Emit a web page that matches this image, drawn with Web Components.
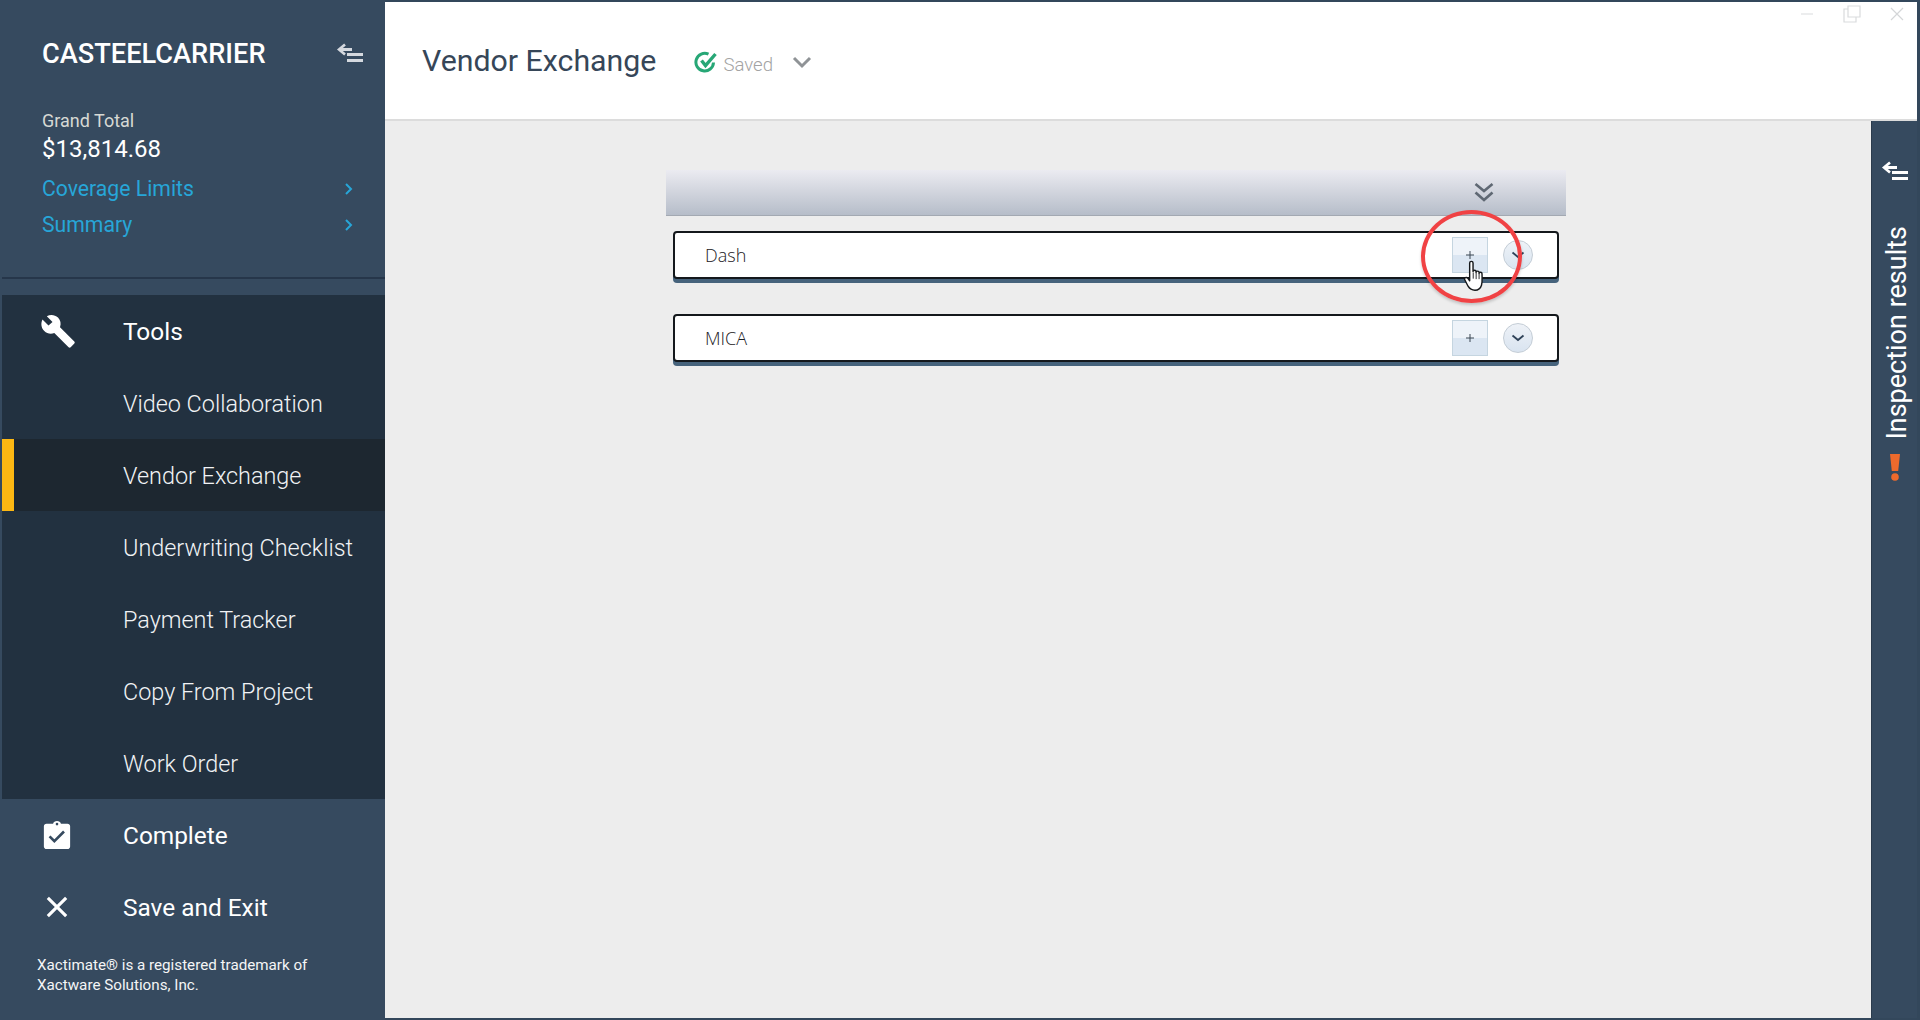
<!DOCTYPE html>
<html>
<head>
<meta charset="utf-8">
<title>Vendor Exchange</title>
<style>
  html, body { margin: 0; height: 100%; overflow: hidden; background: #ededed; }
  body { font-family: Roboto, "Liberation Sans", sans-serif; }
</style>
</head>
<body>
<app-shell>
  <side-nav slot="nav">
    <nav-link slot="tools" icon="wrench" strong>Tools</nav-link>
    <nav-link slot="tools">Video Collaboration</nav-link>
    <nav-link slot="tools" active>Vendor Exchange</nav-link>
    <nav-link slot="tools">Underwriting Checklist</nav-link>
    <nav-link slot="tools">Payment Tracker</nav-link>
    <nav-link slot="tools">Copy From Project</nav-link>
    <nav-link slot="tools">Work Order</nav-link>
    <nav-link slot="actions" icon="clipboard" strong>Complete</nav-link>
    <nav-link slot="actions" icon="close" strong>Save and Exit</nav-link>
  </side-nav>
  <page-header slot="header" heading="Vendor Exchange"></page-header>
  <vendor-panel slot="main">
    <vendor-row hot>Dash</vendor-row>
    <vendor-row>MICA</vendor-row>
  </vendor-panel>
  <inspection-rail slot="rail"></inspection-rail>
</app-shell>

<script>
const COLLAPSE = `<path d="M9 2.500 3 7.500l6 5" fill="none" stroke="currentColor" stroke-width="2.600"/><path d="M3.500 7.500H16" stroke="currentColor" stroke-width="3"/><path d="M11 12.500H27M11 18.500H27" stroke="currentColor" stroke-width="3"/>`;

class AppShell extends HTMLElement {
  constructor() {
    super();
    this.attachShadow({ mode: 'open' });
    this.shadowRoot.innerHTML = `
      <style>
        :host {
          display: grid;
          grid-template-columns: 383px 1fr 46px;
          grid-template-rows: 119px 1fr;
          width: 1920px;
          height: 1020px;
          box-sizing: border-box;
          border: 2px solid #33475b;
          border-width: 2px 3px 2px 2px;
          background: #ededed;
        }
        .nav { grid-row: 1 / 3; display: flex; min-height: 0; margin-top: -2px; margin-bottom: -2px; }
        .header { grid-column: 2 / 4; display: block; }
        .main { min-width: 0; }
        .rail { display: flex; }
      </style>
      <div class="nav"><slot name="nav"></slot></div>
      <div class="header"><slot name="header"></slot></div>
      <div class="main"><slot name="main"></slot></div>
      <div class="rail"><slot name="rail"></slot></div>
    `;
  }
}
customElements.define('app-shell', AppShell);

class SideNav extends HTMLElement {
  constructor() {
    super();
    this.attachShadow({ mode: 'open' });
    this.shadowRoot.innerHTML = `
      <style>
        :host {
          display: flex;
          flex-direction: column;
          flex: 1;
          background: #364a5f;
          color: #fff;
          font-family: Roboto, "Liberation Sans", sans-serif;
          margin-left: -2px;
          padding-left: 2px;
          width: 385px;
          box-sizing: border-box;
        }
        .brand {
          display: flex;
          justify-content: space-between;
          align-items: center;
          height: 30px;
          margin-top: 39px;
          padding: 0 21px 0 40px;
        }
        .brand b { font-weight: 500; font-size: 27.200px; line-height: 30px; }
        .brand svg { width: 28px; height: 22px; color: #d5d9df; margin-top: -3px; }
        .total { padding: 0 29px 0 40px; margin-top: 41px; }
        .lbl { font-size: 18px; line-height: 22px; color: #d6d9d4; }
        .amt { font-size: 24px; line-height: 28px; margin-top: 3px; }
        .lnk {
          display: flex;
          justify-content: space-between;
          align-items: center;
          color: #27a6d8;
          font-size: 21.200px;
          line-height: 24px;
          height: 36px;
        }
        .lnk svg { width: 10px; height: 14px; margin-right: 2px; }
        .links { margin-top: 8px; }
        .rule { height: 2px; background: #26364a; margin-top: 34px; }
        .tools { margin-top: 16px; background: #223140; }
        .foot { font-size: 15.200px; line-height: 20px; padding: 12px 0 0 35px; color: #f4f5f6; }
      </style>
      <div class="brand">
        <b>CASTEELCARRIER</b>
        <svg viewBox="0 0 28 22">${COLLAPSE}</svg>
      </div>
      <div class="total">
        <div class="lbl">Grand Total</div>
        <div class="amt">$13,814.68</div>
        <div class="links">
          <div class="lnk">Coverage Limits <svg viewBox="0 0 10 14"><path d="M2 2l5 5-5 5" fill="none" stroke="#27a6d8" stroke-width="2"/></svg></div>
          <div class="lnk">Summary <svg viewBox="0 0 10 14"><path d="M2 2l5 5-5 5" fill="none" stroke="#27a6d8" stroke-width="2"/></svg></div>
        </div>
      </div>
      <div class="rule"></div>
      <div class="tools"><slot name="tools"></slot></div>
      <div><slot name="actions"></slot></div>
      <div class="foot">Xactimate® is a registered trademark of<br>Xactware Solutions, Inc.</div>
    `;
  }
}
customElements.define('side-nav', SideNav);

const NAV_ICONS = {
  wrench: `<svg viewBox="0 0 36 36"><path fill="#fff" d="M3.500 6.500 9.500 12.500 13.500 9 7.800 3.200C11.500 1 16 1.600 19 4.600c2.600 2.600 3.300 6.400 2 9.600L35.300 28.500c.6.6.6 1.500 0 2.100l-3.600 3.600c-.6.6-1.500.6-2.100 0L15.300 20c-3.400 1.400-7.300.7-10-2C2.200 15 1.600 10.200 3.500 6.500z"/></svg>`,
  clipboard: `<svg viewBox="0 0 30 32"><path fill="#fff" d="M3 3h7.500C11 1.200 12.800 0 15 0s4 1.200 4.500 3H27c1.700 0 3 1.300 3 3v23c0 1.700-1.300 3-3 3H3c-1.700 0-3-1.300-3-3V6c0-1.700 1.300-3 3-3z"/><circle cx="15" cy="3.500" r="1.500" fill="#364a5f"/><path d="M6.500 17.500l5.500 5.500 11-11" fill="none" stroke="#364a5f" stroke-width="3"/></svg>`,
  close: `<svg viewBox="0 0 24 24"><path d="M2 2l20 20M22 2 2 22" stroke="#fff" stroke-width="3.400"/></svg>`
};

class NavLink extends HTMLElement {
  constructor() {
    super();
    this.attachShadow({ mode: 'open' });
  }
  connectedCallback() {
    const icon = NAV_ICONS[this.getAttribute('icon')] || '';
    const size = { wrench: 36, clipboard: 28, close: 22 }[this.getAttribute('icon')] || 0;
    this.shadowRoot.innerHTML = `
      <style>
        :host {
          display: flex;
          align-items: center;
          height: 72px;
          position: relative;
          font-size: 23.400px;
          font-weight: 300;
          color: #f1f3f5;
        }
        :host([strong]) { font-size: 24.400px; font-weight: 400; color: #fff; }
        :host(:not([strong])) span { padding-top: 2px; }
        :host([active]) { background: #1d2730; }
        :host([active])::before {
          content: '';
          position: absolute;
          left: 0; top: 0; bottom: 0;
          width: 12px;
          background: #fdb813;
        }
        .ic { width: 121px; flex: none; display: flex; justify-content: center; padding-right: 12px; box-sizing: border-box; }
        .ic svg { width: ${size}px; height: ${size}px; }
      </style>
      <div class="ic">${icon}</div>
      <span><slot></slot></span>
    `;
  }
}
customElements.define('nav-link', NavLink);

class PageHeader extends HTMLElement {
  constructor() {
    super();
    this.attachShadow({ mode: 'open' });
  }
  connectedCallback() {
    this.shadowRoot.innerHTML = `
      <style>
        :host {
          display: flex;
          align-items: center;
          height: 119px;
          box-sizing: border-box;
          background: #fff;
          border-bottom: 2px solid #dcdcdc;
          padding-left: 37px;
          position: relative;
          font-family: Roboto, "Liberation Sans", sans-serif;
        }
        h1 { margin: 0; font-size: 30.300px; font-weight: 400; color: #364658; }
        .check { width: 24px; height: 24px; margin-left: 38px; margin-top: 3px; }
        .saved { color: #a3a3a3; font-size: 18.600px; font-weight: 300; margin-left: 5px; margin-top: 8px; }
        .chev { width: 20px; height: 14px; margin-left: 19px; margin-top: 3px; }
        .win { position: absolute; top: 3px; right: 12px; display: flex; gap: 28px; align-items: center; }
        .win svg { width: 16px; height: 16px; display: block; }
        .win svg.w { width: 18px; height: 18px; }
      </style>
      <h1>${this.getAttribute('heading')}</h1>
      <svg class="check" viewBox="0 0 24 24">
        <path d="M19.500 12.500A8.800 8.800 0 1 1 14.500 4.200" fill="none" stroke="#27a776" stroke-width="3"/>
        <path d="M7.500 10.500l4 5L21.500 4" fill="none" stroke="#27a776" stroke-width="3.400"/>
      </svg>
      <span class="saved">Saved</span>
      <svg class="chev" viewBox="0 0 20 14"><path d="M2 3l8 8 8-8" fill="none" stroke="#8f9396" stroke-width="3"/></svg>
      <div class="win">
        <svg viewBox="0 0 16 16"><path d="M2 8h12" stroke="#dfe1e3" stroke-width="1.200"/></svg>
        <svg class="w" viewBox="0 0 18 18"><path d="M5 1h12v11H5z M5 4H1v13h12v-5" fill="none" stroke="#d9dbdd" stroke-width="1.200"/></svg>
        <svg viewBox="0 0 16 16"><path d="M2 2l12 12M14 2 2 14" stroke="#d4d6d8" stroke-width="1.200"/></svg>
      </div>
    `;
  }
}
customElements.define('page-header', PageHeader);

class VendorPanel extends HTMLElement {
  constructor() {
    super();
    this.attachShadow({ mode: 'open' });
    this.shadowRoot.innerHTML = `
      <style>
        :host { display: block; width: 900px; margin: 49px 0 0 281px; }
        .band {
          height: 46px;
          background: linear-gradient(#ebebf1, #b6bdc9);
          border-bottom: 1px solid #a3a9b2;
          box-sizing: border-box;
          display: flex;
          justify-content: flex-end;
          align-items: center;
          padding: 0 72px 0 0;
        }
        .band svg { width: 20px; height: 20px; margin-top: -1px; }
        .rows { display: flex; flex-direction: column; gap: 35px; padding: 15px 7px 0; }
      </style>
      <div class="band">
        <svg viewBox="0 0 20 20">
          <path d="M1.500 2l8.500 7 8.500-7" fill="none" stroke="#5f6873" stroke-width="2.600"/>
          <path d="M1.500 10.500l8.500 7.500 8.500-7.500" fill="none" stroke="#5f6873" stroke-width="2.600"/>
        </svg>
      </div>
      <div class="rows"><slot></slot></div>
    `;
  }
}
customElements.define('vendor-panel', VendorPanel);

class VendorRow extends HTMLElement {
  constructor() {
    super();
    this.attachShadow({ mode: 'open' });
  }
  connectedCallback() {
    const hot = this.hasAttribute('hot');
    this.shadowRoot.innerHTML = `
      <style>
        :host {
          display: flex;
          align-items: center;
          height: 48px;
          width: 886px;
          box-sizing: border-box;
          background: #fff;
          border: 2px solid #14181c;
          border-radius: 4px;
          box-shadow: 0 4px 0 0 #46637c;
          padding-left: 30px;
          position: relative;
          font-family: "Open Sans", sans-serif;
          font-size: 18px;
          font-weight: 300;
          color: #1c2024;
        }
        .name { flex: 1; }
        .plus {
          width: 36px; height: 36px;
          box-sizing: border-box;
          border: 1px solid #c5d5e0;
          background: linear-gradient(#eef3f9 0 50%, #dbe6f2 50%);
          display: flex; align-items: center; justify-content: center;
          margin-right: 15px;
        }
        .plus svg { width: 10px; height: 10px; }
        .more {
          width: 30px; height: 30px;
          box-sizing: border-box;
          border-radius: 50%;
          border: 1px solid #c4cdd6;
          background: linear-gradient(#eef2f7, #d9e4f0);
          display: flex; align-items: center; justify-content: center;
          margin-right: 24px;
        }
        .more svg { width: 14px; height: 8px; }
        .ring {
          position: absolute;
          left: 746px; top: -23px;
          width: 101px; height: 93px;
          box-sizing: border-box;
          border: 4px solid #f04244;
          border-radius: 50%;
          box-shadow: 0 2px 3px rgba(0,0,0,.18);
          pointer-events: none;
        }
        .hand { position: absolute; left: 788px; top: 27px; width: 24px; height: 32px; }
      </style>
      <span class="name"><slot></slot></span>
      <div class="plus"><svg viewBox="0 0 10 10"><path d="M5 1v8M1 5h8" stroke="#3a4652" stroke-width="1"/></svg></div>
      <div class="more"><svg viewBox="0 0 14 8"><path d="M1.500 1.500 7 6l5.500-4.500" fill="none" stroke="#2f4258" stroke-width="1.800"/></svg></div>
      ${hot ? `<div class="ring"></div>
      <svg class="hand" viewBox="0 0 26 36">
        <path fill="#fff" stroke="#15181b" stroke-width="1.600" stroke-linejoin="round" d="M7 3.500c0-2.600 3.800-2.600 3.800 0V13c0-2 3.400-2 3.400 0v1c0-2 3.400-2 3.400 0v1.200c0-2 3.300-2 3.300.2 0 5 .6 9-.6 13-1 3.300-3 5.600-7.300 5.600-3.800 0-6-1.500-7.800-4.500L1.600 22.500c-1.300-2.200 1.700-4 3.400-1.800l2 2.600z"/>
        <path stroke="#15181b" stroke-width="1" d="M11 14v7M14.300 14.500v7M17.600 15.500v6"/>
      </svg>` : ''}
    `;
  }
}
customElements.define('vendor-row', VendorRow);

class InspectionRail extends HTMLElement {
  constructor() {
    super();
    this.attachShadow({ mode: 'open' });
    this.shadowRoot.innerHTML = `
      <style>
        :host {
          display: flex;
          flex-direction: column;
          align-items: center;
          flex: 1;
          background: #364a5f;
          color: #fff;
          font-family: Roboto, "Liberation Sans", sans-serif;
          border-left: 1px solid #2b3b4c;
          box-sizing: border-box;
        }
        .flip { width: 28px; height: 22px; margin-top: 39px; color: #fff; }
        .label {
          writing-mode: vertical-rl;
          transform: rotate(180deg);
          font-size: 27px;
          font-weight: 400;
          line-height: 30px;
          margin-top: 44px;
          margin-left: 4px;
        }
        .bang { width: 12px; height: 28px; margin-top: 13px; }
      </style>
      <svg class="flip" viewBox="0 0 28 22">${COLLAPSE}</svg>
      <div class="label">Inspection results</div>
      <svg class="bang" viewBox="0 0 12 28">
        <path d="M1 1h10l-1.800 17H2.800z" fill="#ee6a2c"/>
        <circle cx="6" cy="24" r="3.800" fill="#ee6a2c"/>
      </svg>
    `;
  }
}
customElements.define('inspection-rail', InspectionRail);
</script>
</body>
</html>
